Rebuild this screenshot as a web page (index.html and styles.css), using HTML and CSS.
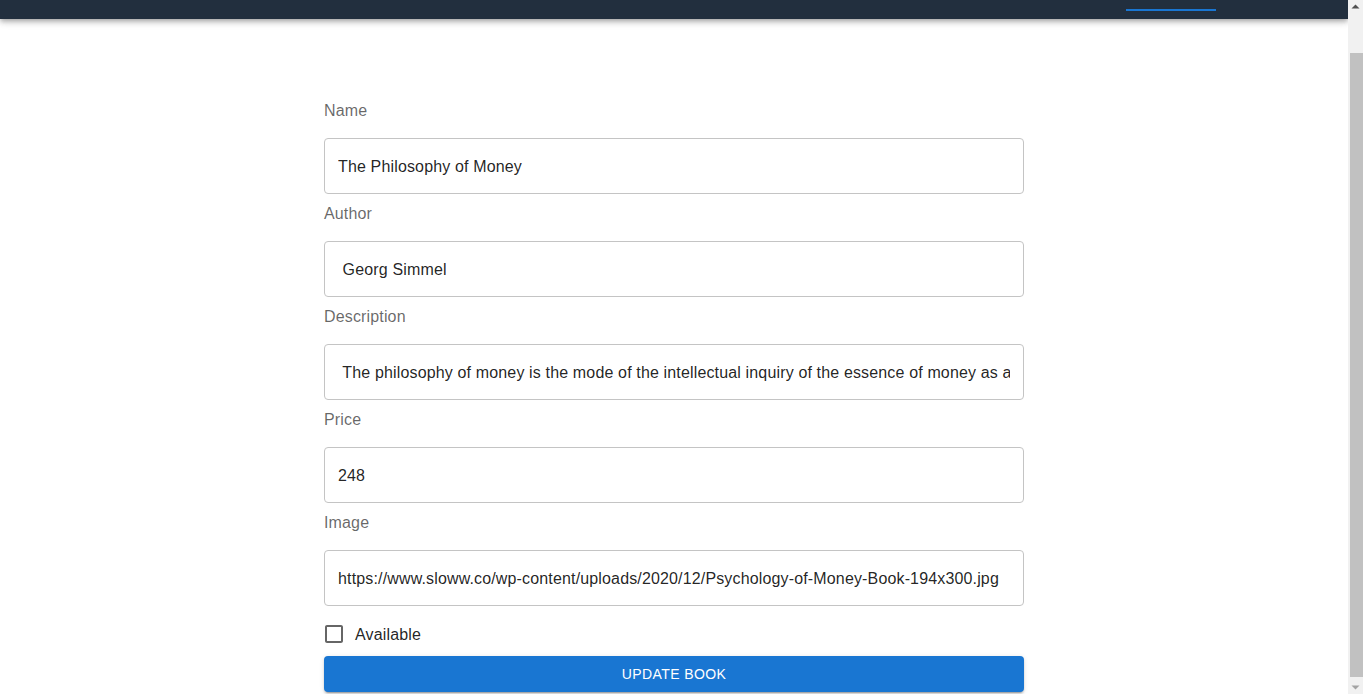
FILE: index.html
```html
<!DOCTYPE html>
<html lang="en">
<head>
<meta charset="utf-8">
<title>Update Book</title>
<link rel="stylesheet" href="styles.css">
</head>
<body>
<header class="appbar">
  <nav class="tabs">
    <div class="tab tab-active"></div>
  </nav>
</header>
<main class="page">
  <form class="book-form">
    <div class="field">
      <label class="field-label" for="name">Name</label>
      <input class="field-input" id="name" type="text" value="The Philosophy of Money">
    </div>
    <div class="field">
      <label class="field-label" for="author">Author</label>
      <input class="field-input" id="author" type="text" value=" Georg Simmel">
    </div>
    <div class="field">
      <label class="field-label" for="description">Description</label>
      <input class="field-input" id="description" type="text" value=" The philosophy of money is the mode of the intellectual inquiry of the essence of money as a social phenomenon">
    </div>
    <div class="field">
      <label class="field-label" for="price">Price</label>
      <input class="field-input" id="price" type="text" value="248">
    </div>
    <div class="field">
      <label class="field-label" for="image">Image</label>
      <input class="field-input" id="image" type="text" value="https://www.sloww.co/wp-content/uploads/2020/12/Psychology-of-Money-Book-194x300.jpg">
    </div>
    <label class="check-row">
      <span class="check-box">
        <svg viewBox="0 0 24 24" width="24" height="24" aria-hidden="true"><path fill="currentColor" d="M19 5v14H5V5h14m0-2H5c-1.1 0-2 .9-2 2v14c0 1.1.9 2 2 2h14c1.1 0 2-.9 2-2V5c0-1.1-.9-2-2-2z"/></svg>
      </span>
      <span class="check-text">Available</span>
    </label>
    <button class="submit-btn" type="button">Update Book</button>
  </form>
</main>
<aside class="scrollbar" aria-hidden="true">
  <svg class="sb-arrow" width="15" height="17" viewBox="0 0 15 17"><path d="M3.5 8.5h8L7.5 4.5z" fill="#505050"/></svg>
  <div class="sb-track"><div class="sb-thumb"></div></div>
  <svg class="sb-arrow" width="15" height="17" viewBox="0 0 15 17"><path d="M3.5 8.5h8L7.5 12.5z" fill="#a3a3a3"/></svg>
</aside>
<script src="script.js"></script>
</body>
</html>
```

FILE: styles.css
```css
html, body {
  margin: 0;
  padding: 0;
  background: #ffffff;
}
body {
  font-family: "Liberation Sans", Arial, sans-serif;
  color: rgba(0, 0, 0, 0.87);
  padding-right: 15px;
}
.appbar {
  height: 60px;
  background: #222f3e;
  box-shadow: 0 2px 4px -1px rgba(0,0,0,0.2), 0 4px 5px 0 rgba(0,0,0,0.14), 0 1px 10px 0 rgba(0,0,0,0.12);
  display: flex;
  justify-content: flex-end;
  position: relative;
  z-index: 1;
}
.tabs {
  display: flex;
  align-items: flex-end;
  padding-right: 132px;
  padding-bottom: 8px;
}
.tab {
  width: 90px;
  height: 2px;
}
.tab-active {
  background: #1976d2;
}
.page {
  display: flex;
  justify-content: center;
  padding-top: 79px;
  padding-bottom: 2px;
}
.book-form {
  width: 700px;
  display: flex;
  flex-direction: column;
}
.field {
  display: flex;
  flex-direction: column;
  margin-bottom: 7px;
}
.field-label {
  font-size: 16px;
  line-height: 24px;
  padding-top: 1px;
  letter-spacing: 0.15px;
  color: rgba(0, 0, 0, 0.6);
  margin-bottom: 15px;
}
.field-input {
  box-sizing: border-box;
  height: 56px;
  width: 100%;
  margin: 0;
  border: 1px solid #c4c4c4;
  border-radius: 4px;
  padding: 2px 13px 0;
  font-family: "Liberation Sans", Arial, sans-serif;
  font-size: 16px;
  letter-spacing: 0.15px;
  color: rgba(0, 0, 0, 0.87);
  background: #fff;
  outline: none;
}
.check-row {
  display: flex;
  align-items: center;
  height: 42px;
  margin-left: -11px;
}
.check-box {
  width: 42px;
  height: 42px;
  display: flex;
  align-items: center;
  justify-content: center;
  color: rgba(0, 0, 0, 0.6);
}
.check-box svg {
  display: block;
}
.check-text {
  font-size: 16px;
  line-height: 24px;
  padding-top: 2px;
  letter-spacing: 0.15px;
  color: rgba(0, 0, 0, 0.87);
}
.submit-btn {
  margin-top: 1px;
  height: 36px;
  width: 100%;
  border: none;
  border-radius: 4px;
  background: #1976d2;
  color: #ffffff;
  font-family: "Liberation Sans", Arial, sans-serif;
  font-size: 14px;
  font-weight: 500;
  letter-spacing: 0.4px;
  text-transform: uppercase;
  box-shadow: 0 3px 1px -2px rgba(0,0,0,0.2), 0 2px 2px 0 rgba(0,0,0,0.14), 0 1px 5px 0 rgba(0,0,0,0.12);
  cursor: pointer;
}
.scrollbar {
  position: fixed;
  top: 0;
  right: 0;
  width: 15px;
  height: 100vh;
  background: #f1f1f1;
  display: flex;
  flex-direction: column;
  z-index: 2;
}
.sb-arrow {
  display: block;
  flex: none;
}
.sb-track {
  flex: 1;
  display: flex;
  flex-direction: column;
  padding-top: 36px;
}
.sb-thumb {
  flex: 1;
  margin-left: 2px;
  background: #c1c1c1;
}
```

FILE: script.js
```js
window.scrollTo(0, document.documentElement.scrollHeight);
```
